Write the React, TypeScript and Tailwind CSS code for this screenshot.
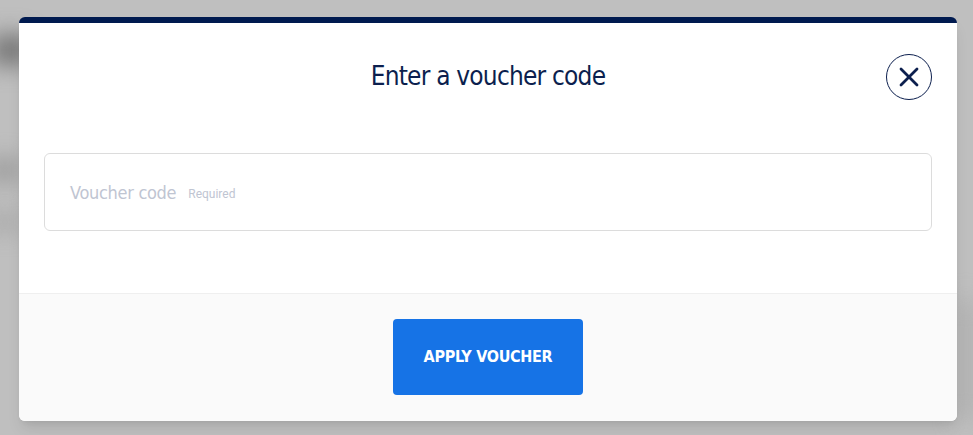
import { X } from 'lucide-react';

export default function App() {
  return (
    <div className="relative w-[973px] h-[435px] overflow-hidden bg-[#bfbfbf]" style={{ fontFamily: 'Roboto, "Open Sans", sans-serif' }}>
      {/* blurred page behind the modal */}
      <div className="absolute -left-[10px] top-[35px] w-[40px] h-[30px] bg-[#6a6a6a] blur-md rounded-full" />
      <div className="absolute -left-[10px] top-[160px] w-[30px] h-[20px] bg-[#8a8a8a] blur-md rounded-full" />
      <div className="absolute -left-[10px] top-[215px] w-[30px] h-[14px] bg-[#9a9a9a] blur-md rounded-full" />
      <div className="absolute right-0 top-[300px] w-[14px] h-[120px] bg-[#a8a8a8] blur-md" />

      <div className="pt-[17px] pl-[19px]">
        <div className="relative w-[938px] h-[404px] bg-white rounded-[6px] overflow-hidden border-t-[6px] border-[#001a4f] flex flex-col shadow-lg">
          <div className="flex-1 px-[25px]">
            <div className="relative flex items-center justify-center h-[105px]">
              <h2 className="text-[26px] tracking-[-0.8px] text-[#0c1f4e] pt-[1px]" style={{ fontFamily: '"DejaVu Sans Condensed", "Liberation Sans Narrow", Roboto, sans-serif', fontWeight: 400 }}>
                Enter a voucher code
              </h2>
              <button className="absolute right-0 top-[31px] w-[46px] h-[46px] rounded-full border border-[#0c1f4e] flex items-center justify-center text-[#0c1f4e]">
                <X size={32} strokeWidth={2.1} />
              </button>
            </div>
            <div className="mt-[25px] h-[78px] border border-[#dcdcdc] rounded-[6px] flex items-center px-[25px] gap-[12px]">
              <span className="text-[18px] text-[#bfc5d2] tracking-[-0.3px]" style={{ fontFamily: '"DejaVu Sans Condensed", Roboto, sans-serif' }}>Voucher code</span>
              <span className="text-[12px] text-[#bfc5d2] mt-[3px]">Required</span>
            </div>
          </div>
          <div className="h-[128px] bg-[#fafafa] border-t border-[#efefef] flex items-start justify-center pt-[25px]">
            <button className="w-[190px] h-[76px] bg-[#1673e6] rounded-[4px] text-white text-[16px] font-bold tracking-[-0.3px]" style={{ fontFamily: '"DejaVu Sans Condensed", Roboto, sans-serif' }}>
              APPLY VOUCHER
            </button>
          </div>
        </div>
      </div>
    </div>
  );
}
